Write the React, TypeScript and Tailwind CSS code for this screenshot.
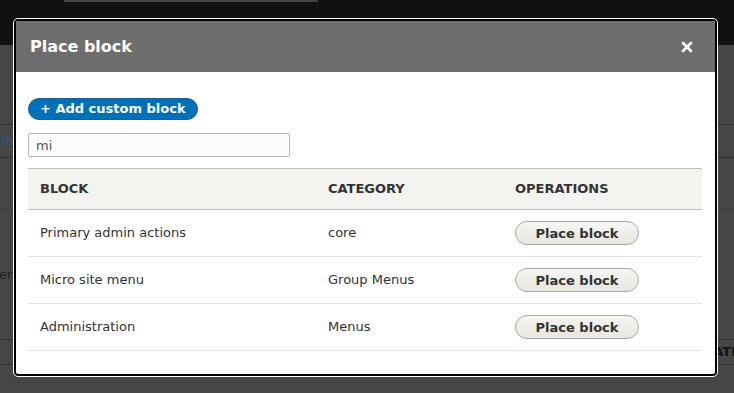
import { X } from 'lucide-react'

const rows = [
  { block: 'Primary admin actions', category: 'core' },
  { block: 'Micro site menu', category: 'Group Menus' },
  { block: 'Administration', category: 'Menus' },
]

function Backdrop() {
  return (
    <div className="flex h-full flex-col">
      <div className="relative h-[45px] shrink-0 bg-[#111]">
        <div className="ml-[64px] h-[2px] w-[254px] bg-[#444]" />
      </div>
      <div className="flex flex-1 flex-col bg-[#464646]">
        <div className="h-[80px] border-b border-[#333]" />
        <div className="flex h-[33px] items-center border-b border-[#333] text-[13px] text-[#2a5d86]">
          <span className="-ml-[2px]">lib</span>
        </div>
        <div className="h-[52px] border-b border-[#3a3a3a]" />
        <div className="flex h-[130px] items-center border-b border-[#333] text-[13px] text-[#222]">
          <span className="-ml-[1px]">er</span>
        </div>
        <div className="flex h-[25px] items-center justify-end border-b border-[#333] text-[13px] font-bold text-[#111]">
          <span className="-mr-[2px]">ATI</span>
        </div>
        <div className="flex-1" />
      </div>
    </div>
  )
}

export default function App() {
  return (
    <div className="relative h-[393px] w-[734px] overflow-hidden font-['DejaVu_Sans',sans-serif]">
      <Backdrop />

      <div className="absolute left-[14px] top-[19px] flex h-[357px] w-[703px] flex-col overflow-hidden rounded-[4px] border-2 border-black bg-white outline outline-1 outline-white">
        <div className="flex h-[51px] shrink-0 items-center justify-between bg-[#6e6e6e] pl-[14px] pr-[20px]">
          <h1 className="text-[16px] font-bold text-white">Place block</h1>
          <X size={16} strokeWidth={4} className="text-white" />
        </div>

        <div className="flex flex-col px-[12px] pt-[24px]">
          <div>
            <button className="h-[22px] rounded-full border border-[#1e5c90] bg-[#0071b8] px-[11px] text-[13px] font-bold leading-none text-white">
              + Add custom block
            </button>
          </div>

          <input
            readOnly
            value="mi"
            className="mt-[13px] h-[24px] w-[262px] rounded-[2px] border border-[#b8b8b8] bg-[#fcfcfa] px-[7px] text-[13px] text-[#555] outline-none"
          />

          <table className="mt-[11px] w-[674px] border-collapse text-left text-[13px] text-[#333]">
            <thead>
              <tr className="h-[41px] border-y border-[#bfbfba] bg-[#f3f3f0]">
                <th className="w-[288px] px-[12px] font-bold">BLOCK</th>
                <th className="w-[187px] px-[12px] font-bold">CATEGORY</th>
                <th className="px-[12px] font-bold">OPERATIONS</th>
              </tr>
            </thead>
            <tbody>
              {rows.map((r) => (
                <tr key={r.block} className="h-[47px] border-b border-[#e6e4df]">
                  <td className="px-[12px]">{r.block}</td>
                  <td className="px-[12px]">{r.category}</td>
                  <td className="px-[12px]">
                    <button className="h-[24px] w-[124px] rounded-full border border-[#a6a6a6] bg-gradient-to-b from-[#f6f6f3] to-[#e7e7df] text-[13px] font-bold leading-none text-[#333]">
                      Place block
                    </button>
                  </td>
                </tr>
              ))}
            </tbody>
          </table>
        </div>
      </div>
    </div>
  )
}
